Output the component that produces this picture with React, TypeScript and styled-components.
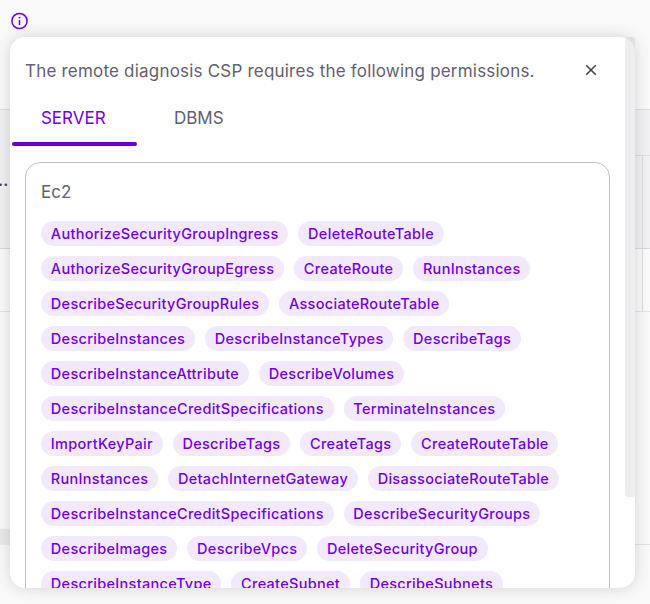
import React from "react";
import styled, { createGlobalStyle } from "styled-components";

const Global = createGlobalStyle`
  * { box-sizing: border-box; }
  body { margin: 0; background: #f9f9f9; font-family: Inter, "Liberation Sans", sans-serif; overflow: hidden; }
`;

const Page = styled.main`
  position: relative;
  width: 650px;
  height: 604px;
  overflow: hidden;
  background: #f9f9f9;
`;

const TopBar = styled.header`
  height: 109px;
  padding: 12px 0 0 11px;
`;

const TableHead = styled.section`
  display: flex;
  justify-content: space-between;
  height: 140px;
  border-top: 1px solid #dcdce2;
  border-bottom: 1px solid #d9d8e2;
  background: #f1f1f4;
`;

const HeadCell = styled.div`
  margin-left: -7px;
  padding-top: 60px;
  font-size: 16px;
  line-height: 20px;
  font-weight: 600;
  color: #4a475a;
`;

const HeadColumns = styled.div`
  display: flex;
  width: 30px;
  margin-top: 45px;
  border-top: 1px solid #dcdce2;
`;

const Column = styled.div`
  width: 23px;
  border-right: 1px solid #dcdce5;
`;

const TableRow = styled.section`
  display: flex;
  justify-content: flex-end;
  height: 63px;
  padding-right: 7px;
  border-bottom: 1px solid #e2e2e7;
  background: #fafafa;
`;

const TableFoot = styled.section`
  height: 233px;
  padding-top: 217px;
  border-bottom: 1px solid #e2e2e8;
`;

const FootScroll = styled.div`
  width: 300px;
  height: 16px;
  background: #e9e9eb;
`;

const Popover = styled.div`
  position: absolute;
  left: 10px;
  top: 37px;
  width: 625px;
  height: 551px;
  display: flex;
  border-radius: 15px;
  background: #fff;
  box-shadow: 0 0 15px rgba(0, 0, 0, 0.16);
`;

const Content = styled.div`
  width: 615px;
  height: 551px;
  overflow: hidden;
  border-bottom-left-radius: 15px;
`;

const ScrollThumb = styled.div`
  width: 10px;
  height: 460px;
  border-radius: 3px;
  background: radial-gradient(circle at -5px 15px, #eeeef0 14.5px, #dfdfe2 15.5px) top / 10px 15px no-repeat, #eeeef0;
`;

const Heading = styled.div`
  display: flex;
  align-items: center;
  justify-content: space-between;
  height: 57px;
  padding: 11px 28px 0 15px;
`;

const Title = styled.h1`
  margin: 0;
  font-size: 17px;
  line-height: 24px;
  font-weight: 400;
  letter-spacing: 0.2px;
  color: #626071;
`;

const CloseButton = styled.button`
  display: flex;
  padding: 0;
  margin-top: -2px;
  border: 0;
  background: none;
  color: #45434f;
`;

const Tabs = styled.nav`
  display: flex;
  height: 52px;
  padding-left: 2px;
`;

const Tab = styled.button<{ $active?: boolean }>`
  display: flex;
  flex-direction: column;
  align-items: center;
  justify-content: flex-end;
  gap: 12px;
  width: 124.5px;
  height: 52px;
  padding: 0;
  border: 0;
  background: none;
  font: 400 17px/24px Inter, "Liberation Sans", sans-serif;
  color: ${(p) => (p.$active ? "#7200e4" : "#626071")};

  &::after {
    content: "";
    width: 100%;
    height: 4px;
    border-radius: 2px;
    background: ${(p) => (p.$active ? "#6c00dd" : "transparent")};
  }
`;

const TabLabel = styled.span<{ $inset?: number }>`
  padding-right: ${(p) => p.$inset ?? 0}px;
`;

const Card = styled.section`
  width: 585px;
  height: 900px;
  margin: 16px 0 0 15px;
  padding: 17px 15px;
  border: 1px solid #bfbfc2;
  border-radius: 15px;
`;

const CardTitle = styled.h2`
  margin: 0 0 17px;
  font-size: 17px;
  line-height: 24px;
  font-weight: 400;
  color: #626071;
`;

const TagRows = styled.div`
  display: grid;
  gap: 10px;
`;

const TagRow = styled.div`
  display: flex;
  gap: 10px;
`;

const Tag = styled.span`
  height: 25px;
  padding: 0 9.8px;
  border-radius: 13px;
  background: #f2eafc;
  font-size: 14.5px;
  line-height: 25px;
  font-weight: 500;
  letter-spacing: 0.3px;
  white-space: nowrap;
  color: #7200e1;
`;

const permissions = [
  ["AuthorizeSecurityGroupIngress", "DeleteRouteTable"],
  ["AuthorizeSecurityGroupEgress", "CreateRoute", "RunInstances"],
  ["DescribeSecurityGroupRules", "AssociateRouteTable"],
  ["DescribeInstances", "DescribeInstanceTypes", "DescribeTags"],
  ["DescribeInstanceAttribute", "DescribeVolumes"],
  ["DescribeInstanceCreditSpecifications", "TerminateInstances"],
  ["ImportKeyPair", "DescribeTags", "CreateTags", "CreateRouteTable"],
  ["RunInstances", "DetachInternetGateway", "DisassociateRouteTable"],
  ["DescribeInstanceCreditSpecifications", "DescribeSecurityGroups"],
  ["DescribeImages", "DescribeVpcs", "DeleteSecurityGroup"],
  ["DescribeInstanceType", "CreateSubnet", "DescribeSubnets"],
];

const InfoIcon = () => (
  <svg width="17" height="18" viewBox="0 0 17 18" fill="none" stroke="#6c00dd" strokeWidth="1.5" display="block">
    <circle cx="8.5" cy="9" r="7.6" />
    <path d="M8.5 8v5" />
    <circle cx="8.5" cy="5.6" r="0.95" fill="#6c00dd" stroke="none" />
  </svg>
);

const CloseIcon = () => (
  <svg width="12" height="12" viewBox="0 0 12 12" fill="none" stroke="currentColor" strokeWidth="1.6">
    <path d="M1.2 1.2l9.6 9.6M10.8 1.2L1.2 10.8" />
  </svg>
);

export default function App() {
  return (
    <Page>
      <Global />
      <TopBar>
        <InfoIcon />
      </TopBar>
      <TableHead>
        <HeadCell>...</HeadCell>
        <HeadColumns>
          <Column />
        </HeadColumns>
      </TableHead>
      <TableRow>
        <Column />
      </TableRow>
      <TableFoot>
        <FootScroll />
      </TableFoot>
      <Popover role="dialog">
        <Content>
          <Heading>
            <Title>The remote diagnosis CSP requires the following permissions.</Title>
            <CloseButton aria-label="Close">
              <CloseIcon />
            </CloseButton>
          </Heading>
          <Tabs>
            <Tab $active>
              <TabLabel $inset={2}>SERVER</TabLabel>
            </Tab>
            <Tab>
              <TabLabel>DBMS</TabLabel>
            </Tab>
          </Tabs>
          <Card>
            <CardTitle>Ec2</CardTitle>
            <TagRows>
              {permissions.map((row, i) => (
                <TagRow key={i}>
                  {row.map((name) => (
                    <Tag key={name}>{name}</Tag>
                  ))}
                </TagRow>
              ))}
            </TagRows>
          </Card>
        </Content>
        <ScrollThumb />
      </Popover>
    </Page>
  );
}
